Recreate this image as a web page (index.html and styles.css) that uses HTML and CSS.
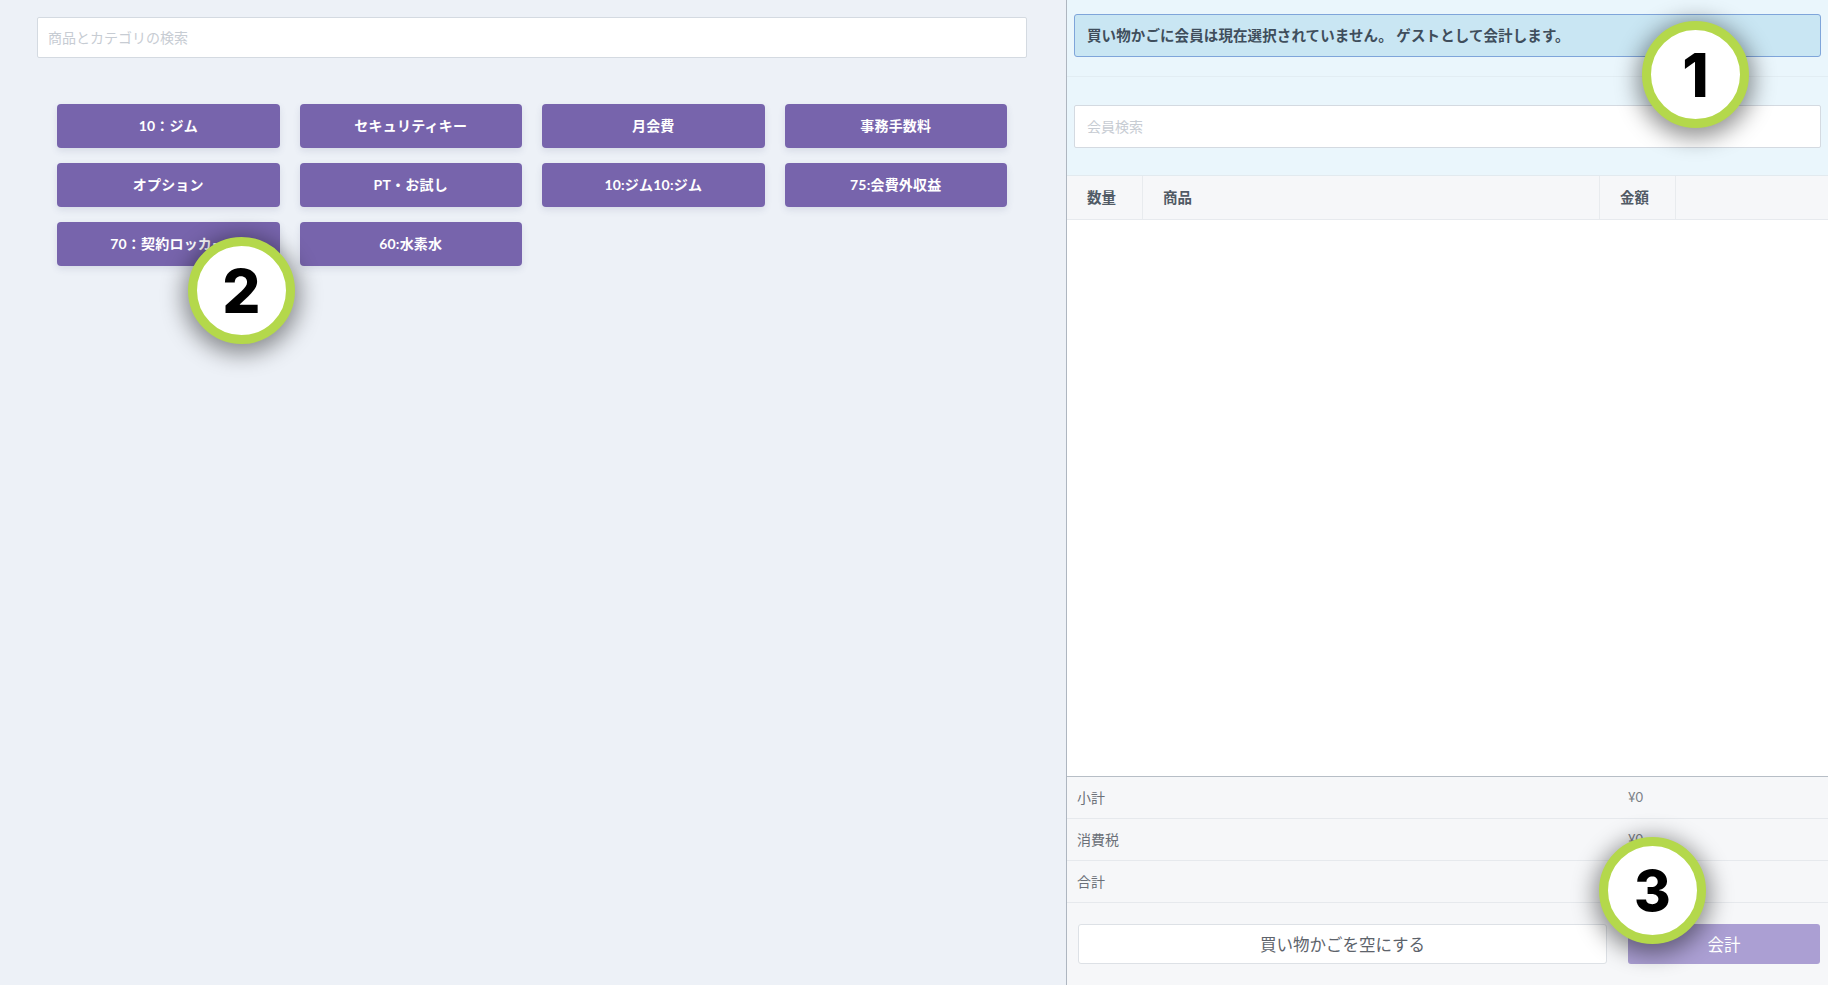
FILE: index.html
```html
<!DOCTYPE html>
<html lang="ja">
<head>
<meta charset="utf-8">
<title>POS</title>
<link rel="stylesheet" href="styles.css">
</head>
<body>
<div class="app">
  <main class="catalog">
    <div class="catalog-inner">
      <input class="field search" type="text" placeholder="商品とカテゴリの検索">
      <div class="tiles">
        <button class="tile">10：ジム</button>
        <button class="tile">セキュリティキー</button>
        <button class="tile">月会費</button>
        <button class="tile">事務手数料</button>
        <button class="tile">オプション</button>
        <button class="tile">PT・お試し</button>
        <button class="tile">10:ジム10:ジム</button>
        <button class="tile">75:会費外収益</button>
        <button class="tile">70：契約ロッカー</button>
        <button class="tile">60:水素水</button>
      </div>
    </div>
  </main>
  <aside class="cart">
    <div class="cart-top">
      <div class="alert">買い物かごに会員は現在選択されていません。 ゲストとして会計します。</div>
    </div>
    <div class="member">
      <input class="field member-field" type="text" placeholder="会員検索">
    </div>
    <div class="thead">
      <div class="th qty">数量</div>
      <div class="th item">商品</div>
      <div class="th price">金額</div>
      <div class="th rest"></div>
    </div>
    <div class="tbody"></div>
    <div class="totals">
      <div class="trow"><span class="tlabel">小計</span><span class="tval">¥0</span></div>
      <div class="trow"><span class="tlabel">消費税</span><span class="tval">¥0</span></div>
      <div class="trow"><span class="tlabel">合計</span><span class="tval"></span></div>
    </div>
    <div class="actions">
      <button class="btn-empty">買い物かごを空にする</button>
      <button class="btn-pay">会計</button>
    </div>
  </aside>
  <div class="marker marker-1">1</div>
  <div class="marker marker-2">2</div>
  <div class="marker marker-3">3</div>
</div>
</body>
</html>
```
FILE: styles.css
```css
* { box-sizing: border-box; }
html, body { margin: 0; padding: 0; }
body {
  font-family: "Lato", "Noto Sans CJK JP", sans-serif;
  background: #edf1f7;
  width: 1828px;
  height: 985px;
  overflow: hidden;
}
.app {
  position: relative;
  display: flex;
  width: 1828px;
  height: 985px;
}
.catalog {
  width: 1067px;
  flex: none;
  background: #edf1f7;
  border-right: 1px solid #aeb6c0;
  padding: 17px 0 0 37px;
}
.catalog-inner { width: 990px; }
.field {
  display: block;
  width: 100%;
  background: #fff;
  border: 1px solid #d4dae1;
  border-radius: 2px;
  font-family: "Lato", "Noto Sans CJK JP", sans-serif;
  font-size: 14px;
  color: #333;
  outline: none;
}
.field::placeholder { color: #c7ccd3; }
.search {
  height: 41px;
  padding: 0 10px;
}
.tiles {
  margin-top: 46px;
  padding: 0 20px;
  display: grid;
  grid-template-columns: repeat(4, 1fr);
  column-gap: 20px;
  row-gap: 15px;
}
.tile {
  height: 44px;
  border: none;
  border-radius: 4px;
  background: #7764ac;
  color: #fff;
  font-family: "Lato", "Noto Sans CJK JP", sans-serif;
  font-weight: 700;
  font-size: 14px;
  letter-spacing: 0.2px;
  box-shadow: 0 3px 7px rgba(70, 80, 120, 0.13);
  padding: 0 0 2px 0;
}
.cart {
  flex: 1;
  display: flex;
  flex-direction: column;
  background: #fff;
  min-width: 0;
}
.cart-top {
  background: #eaf6fc;
  padding: 14px 7px 19px 7px;
  border-bottom: 1px solid #e2edf3;
}
.alert {
  height: 43px;
  background: #c9e6f3;
  border: 1px solid #7fa5da;
  border-radius: 3px;
  padding: 0 12px 3px 12px;
  display: flex;
  align-items: center;
  font-size: 14.5px;
  font-weight: 700;
  color: #3f4e5c;
  letter-spacing: 0.1px;
}
.member {
  background: #eaf6fc;
  padding: 28px 7px 27px 7px;
  border-bottom: 1px solid #e2eaef;
}
.member-field {
  height: 43px;
  padding: 0 12px;
}
.thead {
  display: flex;
  height: 44px;
  background: #f6f7f9;
  border-bottom: 1px solid #e7eaee;
}
.th {
  display: flex;
  align-items: center;
  font-size: 14.5px;
  font-weight: 700;
  color: #515b66;
  border-right: 1px solid #e8ebee;
  padding-left: 20px;
  padding-bottom: 2px;
}
.qty { width: 76px; }
.item { width: 457px; }
.price { width: 76px; }
.rest { flex: 1; border-right: none; }
.tbody {
  flex: 1;
  background: #fff;
}
.totals {
  border-top: 1px solid #b7bec6;
  background: #f6f7f9;
}
.trow {
  display: flex;
  align-items: center;
  height: 42px;
  border-bottom: 1px solid #e6e9ed;
  padding-left: 10px;
  padding-bottom: 2px;
  font-size: 14px;
  color: #6b7078;
}
.tlabel { width: 551px; }
.tval { font-size: 13px; color: #7a7f86; }
.actions {
  flex: none;
  display: flex;
  gap: 21px;
  padding: 21px 8px 21px 11px;
  background: #f6f7f9;
  height: 82px;
}
.btn-empty, .btn-pay {
  height: 40px;
  border-radius: 3px;
  font-family: "Lato", "Noto Sans CJK JP", sans-serif;
  font-size: 16.5px;
  padding-bottom: 2px;
}
.btn-empty {
  flex: 1;
  background: #fff;
  border: 1px solid #dde1e6;
  color: #5d636b;
}
.btn-pay {
  width: 192px;
  flex: none;
  background: #ab9fd3;
  border: none;
  color: #fff;
}
.marker {
  position: absolute;
  width: 107px;
  height: 107px;
  border-radius: 50%;
  background: #fff;
  border: 9px solid #b4d84b;
  box-shadow: 0 5px 22px 5px rgba(0, 0, 0, 0.42);
  display: flex;
  align-items: center;
  justify-content: center;
  font-family: "Inter", "Noto Sans", sans-serif;
  font-weight: 800;
  font-size: 60px;
  color: #000;
  line-height: 1;
}
.marker-1 { left: 1642px; top: 21px; }
.marker-2 { left: 188px; top: 237px; }
.marker-3 { left: 1599px; top: 837px; font-size: 56px; }
```
